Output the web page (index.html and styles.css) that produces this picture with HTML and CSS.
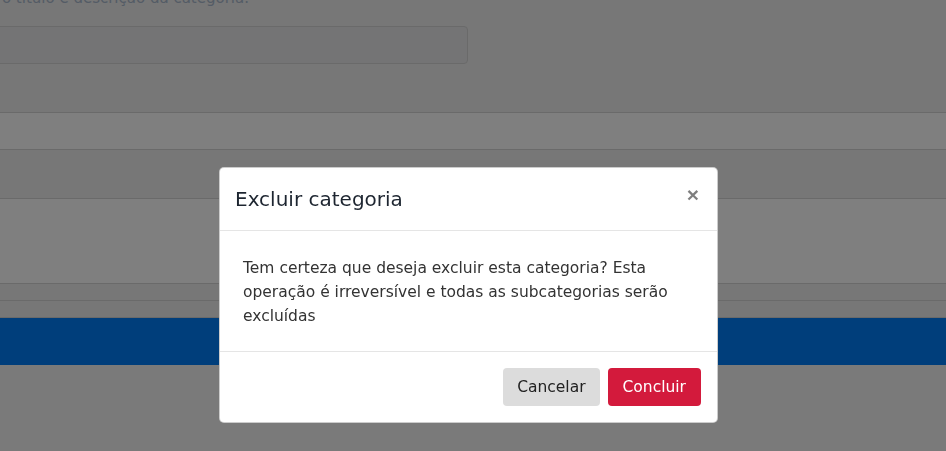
FILE: index.html
```html
<!DOCTYPE html>
<html lang="pt-BR">
<head>
<meta charset="utf-8">
<title>Excluir categoria</title>
<link rel="stylesheet" href="styles.css">
</head>
<body>
<div class="page">
  <section class="form-area">
    <p class="hint">Informe o título e descrição da categoria.</p>
    <div class="input-row"><div class="fake-input"></div></div>
  </section>
  <div class="band white h36"></div>
  <div class="band grey h48"></div>
  <div class="band white h84"></div>
  <div class="band grey h16"></div>
  <div class="band grey h16"></div>
  <div class="bluebar"></div>
  <div class="rest"></div>
</div>

<div class="backdrop">
  <div class="modal" role="dialog">
    <header class="modal-header">
      <h5 class="modal-title">Excluir categoria</h5>
      <button class="close" type="button">×</button>
    </header>
    <div class="modal-body">
      <p>Tem certeza que deseja excluir esta categoria? Esta operação é irreversível e todas as subcategorias serão excluídas</p>
    </div>
    <footer class="modal-footer">
      <button class="btn btn-cancel" type="button">Cancelar</button>
      <button class="btn btn-confirm" type="button">Concluir</button>
    </footer>
  </div>
</div>
</body>
</html>
```

FILE: styles.css
```css
* { box-sizing: border-box; }
html, body { margin: 0; padding: 0; }
body {
  width: 946px;
  height: 451px;
  overflow: hidden;
  font-family: "DejaVu Sans", "Open Sans", sans-serif;
  background: #f4f4f4;
  position: relative;
}
.page { display: flex; flex-direction: column; }
.form-area {
  height: 113px;
  background: #eeeeee;
  border-bottom: 1px solid #d4d4d4;
  overflow: hidden;
}
.hint {
  margin: -14px 0 0 -61px;
  font-size: 15px;
  line-height: 24px;
  color: #a9b8cc;
  white-space: nowrap;
}
.input-row { margin-top: 16px; }
.fake-input {
  width: 488px;
  height: 38px;
  margin-left: -20px;
  background: #e8e9eb;
  border: 1px solid #d4d4d4;
  border-radius: 4px;
}
.band { border-bottom: 1px solid #d4d4d4; }
.white { background: #ffffff; }
.grey { background: #eeeeee; }
.h36 { height: 37px; }
.h48 { height: 49px; }
.h84 { height: 85px; }
.h16 { height: 17px; }
.bluebar { height: 47px; background: #007cf6; }
.rest { flex: 1; }

.backdrop {
  position: fixed;
  inset: 0;
  background: rgba(0, 0, 0, 0.5);
  padding: 167px 0 0 219px;
}
.modal {
  width: 499px;
  background: #fff;
  border: 1px solid rgba(0, 0, 0, 0.2);
  border-radius: 5px;
  color: #212529;
  font-family: "DejaVu Sans", "Open Sans", sans-serif;
}
.modal-header {
  display: flex;
  justify-content: space-between;
  align-items: flex-start;
  padding: 16px 16px 16px 15px;
  border-bottom: 1px solid #e5e5e5;
}
.modal-title {
  margin: 0;
  font-size: 20px;
  line-height: 30px;
  font-weight: 400;
  color: #1d2530;
}
.close {
  border: 0;
  background: transparent;
  padding: 0 2px 0 0;
  margin: 0;
  font-family: "Liberation Sans", Arial, sans-serif;
  font-size: 21px;
  font-weight: 700;
  line-height: 22px;
  color: #000;
  opacity: 0.5;
}
.modal-body { padding: 25px 16px 23px 23px; }
.modal-body p {
  margin: 0;
  font-size: 15.5px;
  line-height: 24px;
  color: #333;
  max-width: 440px;
}
.modal-footer {
  display: flex;
  justify-content: flex-end;
  gap: 8px;
  padding: 16px 16px 16px;
  border-top: 1px solid #e5e5e5;
}
.btn {
  height: 38px;
  padding: 0 14px;
  border: 0;
  border-radius: 4px;
  font-family: "DejaVu Sans", "Open Sans", sans-serif;
  font-size: 15.5px;
  line-height: 38px;
}
.btn-cancel { background: #dcdcdc; color: #222; }
.btn-confirm { background: #d31a3c; color: #fff; padding: 0 15px; }
```
